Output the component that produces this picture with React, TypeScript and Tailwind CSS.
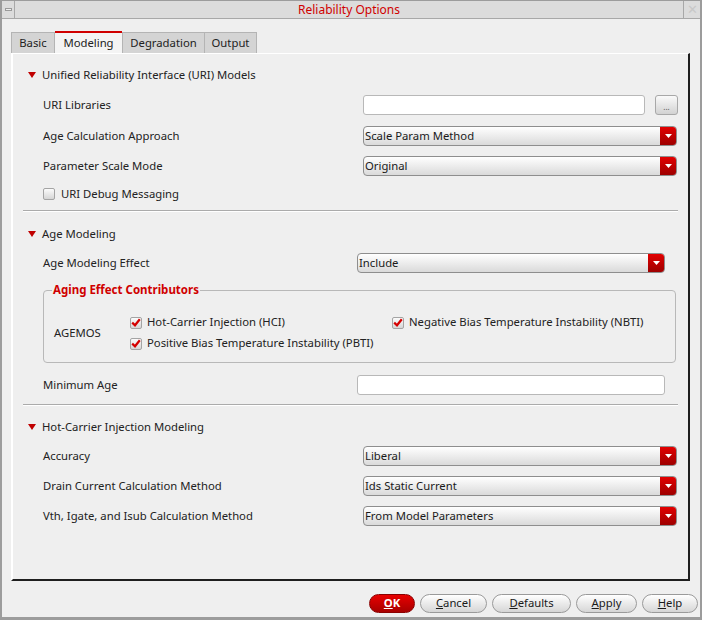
import React from 'react';

function Tri() {
  return (
    <svg width="8" height="6" viewBox="0 0 8 6" className="shrink-0">
      <path d="M0 0 H8 L4 6 Z" fill="#c00000" />
    </svg>
  );
}

function Header({ text }: { text: string }) {
  return (
    <div className="flex items-center h-[20px] pl-[15px] gap-[6px]">
      <Tri />
      <span>{text}</span>
    </div>
  );
}

function Check({ checked }: { checked?: boolean }) {
  return (
    <span className="w-[12px] h-[12px] shrink-0 border border-[#a4a4a4] rounded-[2px] bg-linear-to-b from-[#fbfbfb] to-[#d6d6d6] flex items-center justify-center">
      {checked && (
        <svg width="10" height="9" viewBox="0 0 10 9">
          <path d="M1.2 4.6 L4 7.3 L8.8 1.2" stroke="#d40000" strokeWidth="2.2" fill="none" />
        </svg>
      )}
    </span>
  );
}

function Select({ value, className }: { value: string; className: string }) {
  return (
    <div className={`h-[20px] flex rounded-[4px] border border-[#8e8e8e] bg-linear-to-b from-white to-[#dadada] overflow-hidden ${className}`}>
      <span className="flex-1 pl-[1px] leading-[18px] text-[#1a1a1a]">{value}</span>
      <span className="w-[16px] bg-linear-to-b from-[#e20000] to-[#9e0000] flex items-center justify-center">
        <svg width="7" height="4" viewBox="0 0 7 4">
          <path d="M0 0 H7 L3.5 4 Z" fill="#ffffff" />
        </svg>
      </span>
    </div>
  );
}

function Row({ label, children, labelW = 'w-[320px]' }: { label: string; children: React.ReactNode; labelW?: string }) {
  return (
    <div className="flex items-center h-[20px] pl-[30px]">
      <span className={`${labelW} shrink-0`}>{label}</span>
      {children}
    </div>
  );
}

function Separator() {
  return <div className="mx-[10px] border-t border-[#ababab] border-b border-b-white" />;
}

function Btn({ label, u, className, primary }: { label: string; u: number; className: string; primary?: boolean }) {
  return (
    <div
      className={`h-[19px] rounded-full border flex items-center justify-center ${
        primary
          ? 'border-[#8a0000] bg-linear-to-b from-[#e80000] to-[#a80000] text-white font-bold'
          : 'border-[#9a9a9a] bg-linear-to-b from-white to-[#d6d6d6] text-[#1a1a1a]'
      } ${className}`}
    >
      <span>
        {label.slice(0, u)}
        <span className="underline">{label[u]}</span>
        {label.slice(u + 1)}
      </span>
    </div>
  );
}

export default function App() {
  return (
    <div className="w-[702px] h-[620px] flex flex-col bg-[#efefef] border-x-2 border-b-[3px] border-t border-[#9c9c9c] font-['Noto_Sans',sans-serif] text-[11.3px] text-[#222]">
      {/* title bar */}
      <div className="h-[18px] flex shrink-0 border-b border-[#a8a8a8]">
        <div className="w-[13px] border-r border-[#a8a8a8] bg-[#dcdcdc] flex items-center justify-center">
          <span className="w-[7px] h-[3px] border border-[#9a9a9a] bg-[#eee]" />
        </div>
        <div className="flex-1 bg-[#dcdcdc] flex items-center justify-center text-[12px] text-[#d00000]">
          Reliability Options
        </div>
        <div className="w-[17px] border-l border-[#a8a8a8] bg-[#dcdcdc] flex items-center justify-center text-[13px] text-[#c8c8c8]">
          ✕
        </div>
      </div>

      <div className="flex-1 flex flex-col px-[9px]">
        {/* tabs */}
        <div className="flex mt-[12px] h-[22px]">
          <div className="w-[44px] mt-[1px] border border-b-0 border-[#b4b4b4] bg-[#d4d4d4] flex items-center justify-center">Basic</div>
          <div className="w-[67px] border-t-2 border-t-[#d00000] bg-[#f4f4f4] flex items-center justify-center">Modeling</div>
          <div className="w-[83px] mt-[1px] border border-b-0 border-[#b4b4b4] bg-[#d4d4d4] flex items-center justify-center">Degradation</div>
          <div className="w-[52px] mt-[1px] border border-b-0 border-l-0 border-[#b4b4b4] bg-[#d4d4d4] flex items-center justify-center">Output</div>
        </div>

        {/* panel */}
        <div className="w-[679px] h-[528px] border-l-2 border-t border-white border-r-2 border-b-2 border-r-[#1e1e1e] border-b-[#1e1e1e] flex flex-col pt-[11px]">
          <Header text="Unified Reliability Interface (URI) Models" />
          <div className="mt-[10px]">
            <Row label="URI Libraries">
              <div className="w-[282px] h-[20px] rounded-[3px] border border-[#b8b8b8] bg-white" />
              <div className="ml-[10px] w-[23px] h-[20px] rounded-[3px] border border-[#a8a8a8] bg-linear-to-b from-[#fafafa] to-[#d2d2d2] flex items-center justify-center text-[8px] text-[#555] leading-none pt-[3px]">
                ...
              </div>
            </Row>
          </div>
          <div className="mt-[11px]">
            <Row label="Age Calculation Approach">
              <Select value="Scale Param Method" className="w-[314px]" />
            </Row>
          </div>
          <div className="mt-[10px]">
            <Row label="Parameter Scale Mode">
              <Select value="Original" className="w-[314px]" />
            </Row>
          </div>
          <div className="mt-[9px] h-[18px] pl-[30px] flex items-center gap-[6px]">
            <Check />
            <span>URI Debug Messaging</span>
          </div>
          <div className="mt-[7px]">
            <Separator />
          </div>

          <div className="mt-[12px]">
            <Header text="Age Modeling" />
          </div>
          <div className="mt-[9px]">
            <Row label="Age Modeling Effect" labelW="w-[314px]">
              <Select value="Include" className="w-[308px]" />
            </Row>
          </div>

          <fieldset className="ml-[30px] mt-[9px] w-[633px] border border-[#b8b8b8] rounded-[4px] pl-[8px] pt-[14px] pb-[8px]">
            <legend className="px-[1px] font-bold text-[#d00000] text-[11.5px] leading-[16px]">Aging Effect Contributors</legend>
            <div className="flex items-center">
              <span className="w-[78px] pl-[2px] shrink-0">AGEMOS</span>
              <div className="grid grid-cols-[262px_1fr]">
                <div className="h-[21px] flex items-center gap-[5px]">
                  <Check checked />
                  <span>Hot-Carrier Injection (HCI)</span>
                </div>
                <div className="h-[21px] flex items-center gap-[5px]">
                  <Check checked />
                  <span>Negative Bias Temperature Instability (NBTI)</span>
                </div>
                <div className="h-[21px] flex items-center gap-[5px]">
                  <Check checked />
                  <span>Positive Bias Temperature Instability (PBTI)</span>
                </div>
              </div>
            </div>
          </fieldset>

          <div className="mt-[12px]">
            <Row label="Minimum Age" labelW="w-[314px]">
              <div className="w-[308px] h-[20px] rounded-[3px] border border-[#b8b8b8] bg-white" />
            </Row>
          </div>
          <div className="mt-[9px]">
            <Separator />
          </div>

          <div className="mt-[11px]">
            <Header text="Hot-Carrier Injection Modeling" />
          </div>
          <div className="mt-[9px]">
            <Row label="Accuracy">
              <Select value="Liberal" className="w-[314px]" />
            </Row>
          </div>
          <div className="mt-[10px]">
            <Row label="Drain Current Calculation Method">
              <Select value="Ids Static Current" className="w-[314px]" />
            </Row>
          </div>
          <div className="mt-[10px]">
            <Row label="Vth, Igate, and Isub Calculation Method">
              <Select value="From Model Parameters" className="w-[314px]" />
            </Row>
          </div>
        </div>

        {/* buttons */}
        <div className="flex justify-end gap-[5px] mt-[13px] -mr-[7px]">
          <Btn label="OK" u={0} primary className="w-[46px]" />
          <Btn label="Cancel" u={0} className="w-[67px]" />
          <Btn label="Defaults" u={0} className="w-[79px]" />
          <Btn label="Apply" u={0} className="w-[61px]" />
          <Btn label="Help" u={0} className="w-[56px]" />
        </div>
      </div>
    </div>
  );
}
